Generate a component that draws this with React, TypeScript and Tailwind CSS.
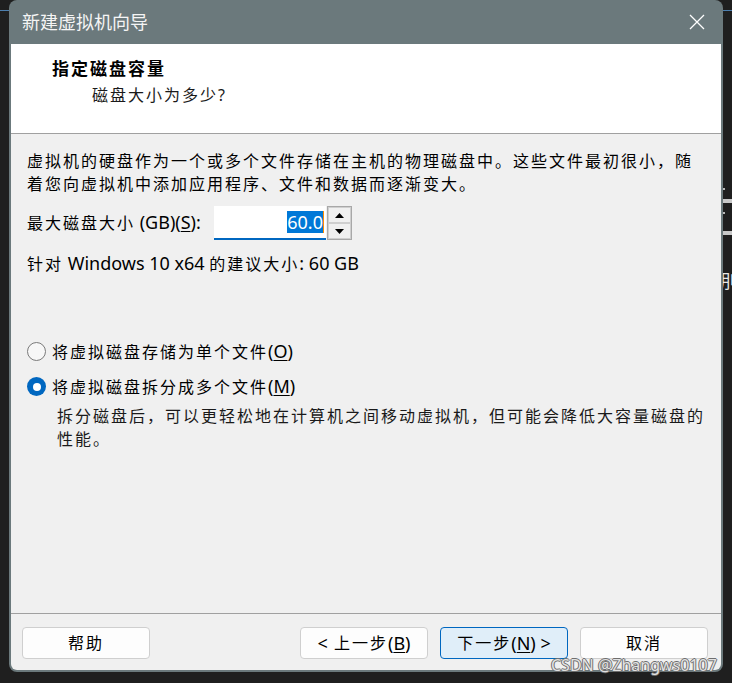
import React from "react";

const latin = "text-[18px] tracking-normal";

function Radio({ checked, children }: { checked?: boolean; children: React.ReactNode }) {
  return (
    <div className="flex h-[23px] items-center">
      {checked ? (
        <span className="flex h-[19px] w-[19px] items-center justify-center rounded-full bg-[#0067c0]">
          <span className="h-[8px] w-[8px] rounded-full bg-white" />
        </span>
      ) : (
        <span className="h-[19px] w-[19px] rounded-full border border-[#7a7a7a] bg-[#f7f7f7]" />
      )}
      <span className="ml-[6px] whitespace-nowrap">{children}</span>
    </div>
  );
}

function Button({ primary, children }: { primary?: boolean; children: React.ReactNode }) {
  return (
    <button
      className={
        primary
          ? "flex h-[32px] w-[128px] items-center justify-center rounded-[4px] border border-[#0067c0] bg-[#e0eef9] text-[16px] tracking-[2px] text-black"
          : "flex h-[32px] w-[128px] items-center justify-center rounded-[4px] border border-[#cfcfcf] bg-[#fdfdfd] text-[16px] tracking-[2px] text-black"
      }
    >
      {children}
    </button>
  );
}

export default function App() {
  return (
    <div className="relative h-[683px] w-[732px] overflow-hidden bg-[#1f1f1f] font-['Noto_Sans','Noto_Sans_CJK_SC',sans-serif] text-black">
      {/* bits of the window behind */}
      <div className="absolute left-0 top-[10px] h-px w-[9px] bg-[#4d7fae]" />
      <div className="absolute right-0 top-[10px] h-px w-[9px] bg-[#4d7fae]" />
      <div className="absolute left-[723px] top-[188px] h-[2px] w-[2px] bg-[#bbb]" />
      <div className="absolute left-[723px] top-[199px] h-[4px] w-[9px] bg-[#c8c8c8]" />
      <div className="absolute left-[723px] top-[212px] h-[2px] w-[2px] bg-[#bbb]" />
      <div className="absolute left-[723px] top-[231px] h-[4px] w-[9px] bg-[#c8c8c8]" />
      <div className="absolute left-[720px] top-[270px] text-[18px] leading-[22px] text-[#e8e8e8]">刖</div>

      <div className="pl-[9px]">
        <div className="relative z-10 flex h-[672px] w-[714px] flex-col rounded-lg bg-[#6b797c] px-[2px] pb-[2px]">
          {/* title bar */}
          <div className="flex h-[44px] items-center justify-between pl-[11px] pr-[16px]">
            <span className="text-[18px] text-[#f5f5f5]">新建虚拟机向导</span>
            <svg width="16" height="16" viewBox="0 0 16 16">
              <path d="M1 1 L15 15 M15 1 L1 15" stroke="#ffffff" strokeWidth="1.3" fill="none" />
            </svg>
          </div>

          <div className="flex flex-1 flex-col overflow-hidden rounded-b-md bg-[#f0f0f0] text-[16px] tracking-[2px]">
            {/* header */}
            <div className="h-[90px] shrink-0 border-b border-[#a0a0a0] bg-white pl-[41px] pt-[13px]">
              <div className="text-[17px] font-bold leading-[23px]">指定磁盘容量</div>
              <div className="mt-[4px] pl-[40px] leading-[23px] text-[#1a1a1a]">磁盘大小为多少?</div>
            </div>

            {/* content */}
            <div className="flex-1 pl-[16px] pt-[16px] leading-[23px]">
              <p className="whitespace-nowrap">
                虚拟机的硬盘作为一个或多个文件存储在主机的物理磁盘中。这些文件最初很小，随
                <br />
                着您向虚拟机中添加应用程序、文件和数据而逐渐变大。
              </p>

              <div className="mt-[10px] flex h-[34px] items-center">
                <span className="w-[187px] whitespace-nowrap">
                  最大磁盘大小<span className={latin}> (GB)(<span className="underline underline-offset-2">S</span>):</span>
                </span>
                <div className="flex h-[34px] w-[112px] items-center justify-end border-b-2 border-[#0067c0] bg-white pr-[2px]">
                  <span className={`${latin} bg-[#0078d7] leading-[22px] text-white`}>60.0</span>
                  <span className="h-[22px] w-px bg-[#ff8c00]" />
                </div>
                <div className="ml-px flex h-[34px] w-[25px] flex-col border border-[#a8a8a8]">
                  <div className="flex flex-1 items-center justify-center border border-[#cfcfcf] bg-[#f0f0f0]">
                    <svg width="9" height="5" viewBox="0 0 9 5">
                      <path d="M0 5 L4.5 0 L9 5 Z" fill="#000" />
                    </svg>
                  </div>
                  <div className="flex flex-1 items-center justify-center border border-[#cfcfcf] bg-[#f0f0f0]">
                    <svg width="9" height="5" viewBox="0 0 9 5">
                      <path d="M0 0 L9 0 L4.5 5 Z" fill="#000" />
                    </svg>
                  </div>
                </div>
              </div>

              <p className="mt-[12px] whitespace-nowrap">
                针对<span className={latin}> Windows 10 x64 </span>的建议大小<span className={latin}>: 60 GB</span>
              </p>

              <div className="mt-[64px]">
                <Radio>
                  将虚拟磁盘存储为单个文件<span className={latin}>(<span className="underline underline-offset-2">O</span>)</span>
                </Radio>
                <div className="mt-[12px]">
                  <Radio checked>
                    将虚拟磁盘拆分成多个文件<span className={latin}>(<span className="underline underline-offset-2">M</span>)</span>
                  </Radio>
                </div>
                <p className="mt-[7px] whitespace-nowrap pl-[30px] text-[#1a1a1a]">
                  拆分磁盘后，可以更轻松地在计算机之间移动虚拟机，但可能会降低大容量磁盘的
                  <br />
                  性能。
                </p>
              </div>
            </div>

            {/* footer */}
            <div className="flex shrink-0 items-center justify-between border-t border-[#a0a0a0] pb-[11px] pl-[11px] pr-[13px] pt-[13px]">
              <Button>帮助</Button>
              <div className="flex gap-[12px]">
                <Button>
                  <span className={latin}>&lt;</span>&nbsp;上一步<span className={latin}>(<span className="underline underline-offset-2">B</span>)</span>
                </Button>
                <Button primary>
                  下一步<span className={latin}>(<span className="underline underline-offset-2">N</span>) &gt;</span>
                </Button>
                <Button>取消</Button>
              </div>
            </div>
          </div>
        </div>
      </div>

      {/* watermark */}
      <div className="absolute left-[551px] top-[654px] z-20 whitespace-nowrap text-[16px] leading-[22px] text-[#e2e2e2] [text-shadow:1px_0_0_#6e6e6e,-1px_0_0_#6e6e6e,0_1px_0_#6e6e6e,0_-1px_0_#6e6e6e]">
        CSDN @Zhangws0107
      </div>
    </div>
  );
}
